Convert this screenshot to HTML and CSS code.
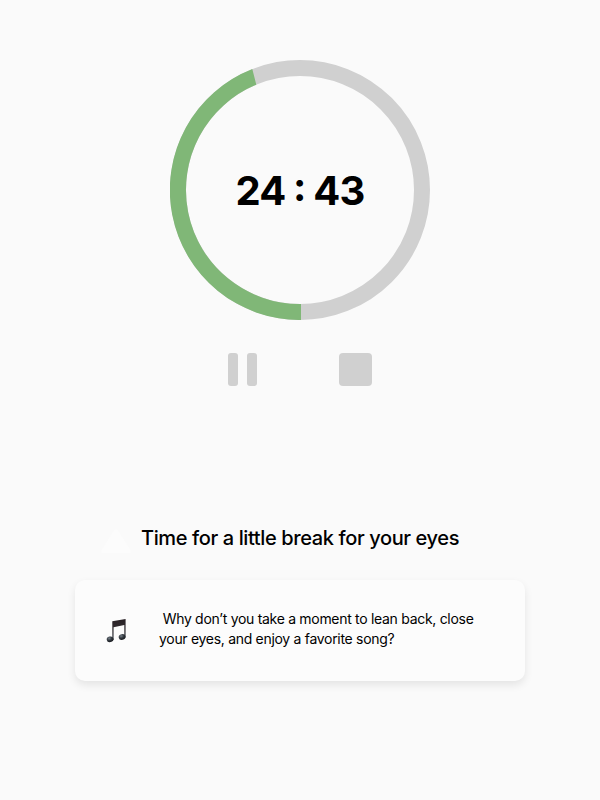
FILE: index.html
```
<!DOCTYPE html>
<html lang="en">
<head>
    <meta charset="UTF-8">
    <meta name="viewport" content="width=device-width, initial-scale=1.0">
    <title>Eye Break Timer</title>
    <link rel="stylesheet" href="styles.css">
</head>
<body>
    <main>
        <section class="timer">
            <svg class="ring" viewBox="0 0 260 260">
                <circle class="ring-track" cx="130" cy="130" r="122"/>
                <path class="ring-progress" d="M131 260A130 130 0 0 1 82.3 9L86.3 24.7A114 114 0 0 0 131 244Z"/>
            </svg>
            <div class="time">24 : 43</div>
        </section>

        <div class="controls">
            <button type="button" class="pause" aria-label="Pause">
                <span></span>
                <span></span>
            </button>
            <button type="button" class="stop" aria-label="Stop"></button>
        </div>

        <div class="heading">
            <svg class="heading-icon" width="30" height="24" viewBox="0 0 30 24">
                <path d="M13 1.5Q15-.8 17 1.5L29.3 21Q30.5 24 27.5 24H2.5Q-.5 24 .7 21Z"/>
            </svg>
            <h1>Time for a little break for your eyes</h1>
        </div>

        <section class="card">
            <svg class="note" width="22" height="26" viewBox="0 0 22 26">
                <defs>
                    <linearGradient id="stem" x1="0" y1="0" x2="0" y2="1">
                        <stop offset="0" stop-color="#282024"/>
                        <stop offset=".35" stop-color="#302a2e"/>
                        <stop offset="1" stop-color="#40464e"/>
                    </linearGradient>
                    <radialGradient id="head" cx=".4" cy=".3" r=".7">
                        <stop offset="0" stop-color="#77818a"/>
                        <stop offset=".5" stop-color="#353b42"/>
                        <stop offset="1" stop-color="#17191d"/>
                    </radialGradient>
                </defs>
                <path fill="url(#stem)" d="M6.3 3.2L19.6 1V19.5H18.3V7L7.6 9.2V22H6.3Z"/>
                <ellipse fill="url(#head)" cx="4.1" cy="21.3" rx="3.4" ry="2.8" transform="rotate(-12 4.1 21.3)"/>
                <ellipse fill="url(#head)" cx="16.1" cy="19" rx="3.4" ry="2.8" transform="rotate(-12 16.1 19)"/>
            </svg>
            <p>&nbsp;Why don’t you take a moment to lean back, close your eyes, and enjoy a favorite song?</p>
        </section>
    </main>
</body>
</html>
```
FILE: styles.css
```
body {
    margin: 0;
    min-height: 100vh;
    background-color: #fafafa;
    color: #000;
    font-family: Inter, "Liberation Sans", sans-serif;
}
main {
    display: flex;
    flex-direction: column;
    align-items: center;
    padding: 60px 0;
}
.timer {
    display: grid;
    place-items: center;
    width: 260px;
    height: 260px;
}
.ring,
.time {
    grid-area: 1 / 1;
}
.ring {
    width: 260px;
    height: 260px;
}
.ring-track {
    fill: none;
    stroke: #d0d0d0;
    stroke-width: 16;
}
.ring-progress {
    fill: #80b777;
}
.time {
    padding-top: 2px;
    font-size: 40px;
    font-weight: 700;
    font-feature-settings: "calt" 1;
    line-height: 48px;
    letter-spacing: -0.02em;
    word-spacing: -1px;
    white-space: nowrap;
}
.controls {
    display: flex;
    gap: 82px;
    margin-top: 33px;
}
.controls button {
    padding: 0;
    border: none;
    cursor: pointer;
}
.pause {
    display: flex;
    gap: 9px;
    background: none;
}
.pause span {
    width: 10px;
    height: 33px;
    border-radius: 3px;
    background-color: #d0d0d0;
}
.stop {
    width: 33px;
    height: 33px;
    border-radius: 4px;
    background-color: #d0d0d0;
}
.heading {
    display: flex;
    gap: 10px;
    width: 398px;
    margin-top: 140px;
}
.heading-icon {
    margin-top: 3px;
    fill: #fcfcfc;
}
h1 {
    margin: 0;
    font-size: 20px;
    font-weight: 500;
    line-height: 24px;
    letter-spacing: -0.38px;
    white-space: nowrap;
}
.card {
    display: flex;
    align-items: center;
    gap: 31px;
    box-sizing: border-box;
    width: 450px;
    height: 101px;
    margin-top: 27px;
    padding: 0 31px;
    border-radius: 10px;
    background-color: #fcfcfc;
    box-shadow: 0 4px 8px rgba(0, 0, 0, 0.09);
}
.note {
    flex: none;
}
.card p {
    width: 330px;
    margin: 0;
    padding-bottom: 3px;
    font-size: 14px;
    line-height: 20px;
    letter-spacing: -0.3px;
}
```
